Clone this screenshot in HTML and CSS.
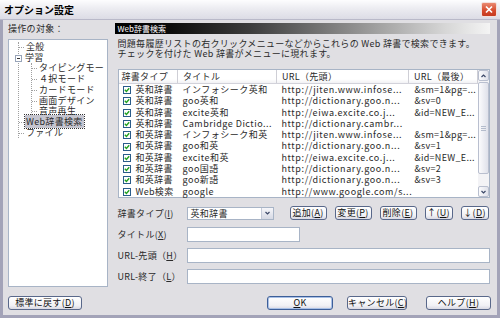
FILE: index.html
```html
<!DOCTYPE html>
<html lang="ja">
  <head>
    <meta charset="utf-8">
    <title>オプション設定</title>
    <link rel="stylesheet" href="styles.css">
  </head>
  <body>
    <div class="window">
      <div class="titlebar">
        <span class="title">オプション設定</span>
        <span class="close">
          <svg width="14" height="13" viewBox="0 0 14 13"><path d="M4 3.5 L10 9.5 M10 3.5 L4 9.5" stroke="#fff" stroke-width="1.7"/></svg>
        </span>
      </div>

      <div class="content">
        <div class="main">
          <div class="side">
            <div class="caption">操作の対象：</div>
            <div class="tree">
              <ul class="root">
                <li><span class="tick"></span>全般</li>
                <li><span class="minus"></span>学習
                  <ul class="sub">
                    <li><span class="tick"></span>タイピングモー</li>
                    <li><span class="tick"></span>４択モード</li>
                    <li><span class="tick"></span>カードモード</li>
                    <li><span class="tick"></span>画面デザイン</li>
                    <li><span class="tick"></span>音声再生</li>
                  </ul>
                </li>
                <li><span class="tick"></span><span class="selected">Web辞書検索</span></li>
                <li><span class="tick"></span>ファイル</li>
              </ul>
            </div>
          </div>

          <div class="panel">
            <div class="banner">Web辞書検索</div>
            <p class="desc">問題毎履歴リストの右クリックメニューなどからこれらの Web 辞書で検索できます。<br>チェックを付けた Web 辞書がメニューに現れます。</p>

            <div class="list">
              <table class="grid">
                <colgroup>
                  <col style="width: 59px">
                  <col style="width: 99px">
                  <col style="width: 132px">
                  <col style="width: 69px">
                </colgroup>
                <thead>
                  <tr><th>辞書タイプ</th><th>タイトル</th><th>URL（先頭）</th><th>URL（最後）</th></tr>
                </thead>
                <tbody>
                  <tr><td><span class="check"></span>英和辞書</td><td>インフォシーク英和</td><td>http://jiten.www.infose...</td><td>&amp;sm=1&amp;pg=...</td></tr>
                  <tr><td><span class="check"></span>英和辞書</td><td>goo英和</td><td>http://dictionary.goo.n...</td><td>&amp;sv=0</td></tr>
                  <tr><td><span class="check"></span>英和辞書</td><td>excite英和</td><td>http://eiwa.excite.co.j...</td><td>&amp;id=NEW_E...</td></tr>
                  <tr><td><span class="check"></span>英和辞書</td><td>Cambridge Dictio...</td><td>http://dictionary.cambr...</td><td></td></tr>
                  <tr><td><span class="check"></span>和英辞書</td><td>インフォシーク和英</td><td>http://jiten.www.infose...</td><td>&amp;sm=1&amp;pg=...</td></tr>
                  <tr><td><span class="check"></span>和英辞書</td><td>goo和英</td><td>http://dictionary.goo.n...</td><td>&amp;sv=1</td></tr>
                  <tr><td><span class="check"></span>和英辞書</td><td>excite和英</td><td>http://eiwa.excite.co.j...</td><td>&amp;id=NEW_E...</td></tr>
                  <tr><td><span class="check"></span>和英辞書</td><td>goo国語</td><td>http://dictionary.goo.n...</td><td>&amp;sv=2</td></tr>
                  <tr><td><span class="check"></span>和英辞書</td><td>goo新語</td><td>http://dictionary.goo.n...</td><td>&amp;sv=3</td></tr>
                  <tr><td><span class="check"></span>Web検索</td><td>google</td><td>http://www.google.com/s...</td><td></td></tr>
                </tbody>
              </table>
              <div class="scrollbar">
                <div class="sb-btn"><svg width="5" height="4" viewBox="0 0 5 4"><path d="M0.5 3 L2.5 1 L4.5 3" fill="none" stroke="#3b4868" stroke-width="1.2"/></svg></div>
                <div class="sb-track">
                  <div class="sb-thumb"><svg width="5" height="5" viewBox="0 0 5 5"><path d="M0 0.5 H5 M0 2.5 H5 M0 4.5 H5" stroke="#b4bccc" stroke-width="1"/></svg></div>
                </div>
                <div class="sb-btn"><svg width="5" height="4" viewBox="0 0 5 4"><path d="M0.5 1 L2.5 3 L4.5 1" fill="none" stroke="#3b4868" stroke-width="1.2"/></svg></div>
              </div>
            </div>

            <div class="form">
              <div class="row">
                <label>辞書タイプ(<u>I</u>)</label>
                <div class="select">
                  <span class="value">英和辞書</span>
                  <span class="drop"><svg width="5" height="4" viewBox="0 0 5 4"><path d="M0.5 1 L2.5 3 L4.5 1" fill="none" stroke="#3b4868" stroke-width="1.2"/></svg></span>
                </div>
                <div class="actions">
                  <button class="btn wide">追加(<u>A</u>)</button>
                  <button class="btn wide">変更(<u>P</u>)</button>
                  <button class="btn wide">削除(<u>E</u>)</button>
                  <button class="btn narrow">↑(<u>U</u>)</button>
                  <button class="btn narrow">↓(<u>D</u>)</button>
                </div>
              </div>
              <div class="row">
                <label>タイトル(<u>X</u>)</label>
                <div class="field short"></div>
              </div>
              <div class="row">
                <label>URL-先頭（<u>H</u>）</label>
                <div class="field long"></div>
              </div>
              <div class="row">
                <label>URL-終了（<u>L</u>）</label>
                <div class="field long"></div>
              </div>
            </div>
          </div>
        </div>

        <div class="footer">
          <button class="btn reset">標準に戻す(<u>D</u>)</button>
          <button class="btn ok default"><u>O</u>K</button>
          <button class="btn cancel">キャンセル(<u>C</u>)</button>
          <button class="btn help">ヘルプ(<u>H</u>)</button>
        </div>
      </div>
    </div>
  </body>
</html>
```

FILE: styles.css
```css
html {
  font-family: "Noto Sans CJK JP", sans-serif;
  font-size: 9px;
  letter-spacing: 0.3px;
  color: #2a2a2a;
}

body {
  margin: 0;
  padding: 0;
  background: #e0dfe3;
}

.window {
  width: 500px;
  height: 318px;
  display: flex;
  flex-direction: column;
}

/* title bar */
.titlebar {
  height: 20px;
  box-sizing: border-box;
  display: flex;
  align-items: center;
  padding: 0 3px 0 4px;
  background: linear-gradient(#fdfdfe, #ececf1 45%, #dcdce5);
  border-bottom: 1px solid #b9b9c9;
}

.title {
  font-weight: bold;
  font-size: 10px;
  letter-spacing: 0;
  color: #000;
}

.close {
  margin-left: auto;
  width: 14px;
  height: 13px;
  display: flex;
  border-radius: 2px;
  border: 1px solid #f4e0dc;
  background: linear-gradient(#e98a72, #d6492b 60%, #c53a1f);
}

/* window body */
.content {
  flex: 1;
  display: flex;
  flex-direction: column;
  padding: 3px 7px 5px 5px;
  border: 3px solid #a3a3b8;
  border-top: none;
}

.main {
  height: 267px;
  display: flex;
  gap: 7px;
}

.side {
  width: 100px;
}

.caption {
  height: 16px;
  line-height: 12px;
}

.tree {
  height: 248px;
  box-sizing: border-box;
  background: #fff;
  border: 1px solid #a8b4c6;
  overflow: hidden;
  white-space: nowrap;
  padding-top: 2px;
}

.tree ul {
  list-style: none;
  margin: 0;
  padding: 0;
  border-left: 1px dotted #a0a0a0;
}

.tree li {
  line-height: 10.7px;
}

.root {
  margin-left: 9px !important;
}

.sub {
  margin-left: 12px !important;
}

.tick {
  display: inline-block;
  width: 5px;
  height: 0;
  border-top: 1px dotted #a0a0a0;
  vertical-align: middle;
  margin-right: 2px;
}

.minus {
  display: inline-block;
  width: 7px;
  height: 7px;
  box-sizing: border-box;
  border: 1px solid #98a4b8;
  background: #fff linear-gradient(#333, #333) no-repeat center / 3px 1px;
  vertical-align: middle;
  margin-left: -4px;
  margin-right: 3px;
}

.selected {
  background: #c5c5cf;
  outline: 1px dotted #333;
  padding: 0 1px;
  margin-left: -1px;
}

/* right panel */
.panel {
  flex: 1;
}

.banner {
  height: 11px;
  line-height: 11px;
  font-size: 8px;
  letter-spacing: 0;
  color: #fff;
  padding-left: 3px;
  background: linear-gradient(to right, #000 0%, #0c0c0c 15%, #3c3c3c 36%, #8c8c8c 63%, #d6d6d6 88%, #f4f4f4 100%);
}

.desc {
  margin: 5px 0 0 0;
  padding-left: 3px;
  line-height: 9.5px;
  height: 19px;
  white-space: nowrap;
}

.list {
  margin-top: 11px;
  margin-left: 3px;
  height: 129px;
  box-sizing: border-box;
  border: 1px solid #a8b4c6;
  background: #fff;
  display: flex;
}

.grid {
  width: 359px;
  table-layout: fixed;
  border-collapse: collapse;
}

.grid th {
  height: 13px;
  padding: 0 0 0 5px;
  font-weight: normal;
  text-align: left;
  background: linear-gradient(#fff 70%, #f1f1f4);
  border-bottom: 1px solid #d2d2da;
  border-right: 1px solid #cfcfd6;
  white-space: nowrap;
}

.grid th:first-child {
  padding-left: 3px;
}

.grid td {
  height: 11.3px;
  line-height: 11.3px;
  padding: 0 0 0 5px;
  white-space: nowrap;
}

.grid td:first-child {
  padding-left: 4px;
}

.grid td:nth-child(2) {
  letter-spacing: 0.5px;
}

.grid td:nth-child(3) {
  letter-spacing: 0.6px;
}

.grid td:nth-child(4) {
  padding-left: 6px;
}

.check {
  display: inline-block;
  width: 8px;
  height: 8px;
  box-sizing: border-box;
  border: 1px solid #2a5c8a;
  background: #fff url("data:image/svg+xml,%3Csvg xmlns='http://www.w3.org/2000/svg' width='6' height='6'%3E%3Cpath d='M0.8 2.8 L2.4 4.4 L5.2 1.2' fill='none' stroke='%2321a121' stroke-width='1.4'/%3E%3C/svg%3E") no-repeat center;
  vertical-align: middle;
  margin: -1px 5px 0 0;
}

/* scrollbar */
.scrollbar {
  width: 11px;
  display: flex;
  flex-direction: column;
  background: #f3f3f6;
}

.sb-btn,
.sb-thumb {
  box-sizing: border-box;
  border: 1px solid #b9bfcf;
  border-radius: 2px;
  background: linear-gradient(to right, #fbfbfd, #dfe1ea);
  display: flex;
  align-items: center;
  justify-content: center;
}

.sb-btn {
  height: 11px;
}

.sb-track {
  flex: 1;
  padding: 1px 0;
}

.sb-thumb {
  height: 92px;
}

/* form */
.form {
  margin-top: 8px;
  display: flex;
  flex-direction: column;
  gap: 7px;
}

.row {
  height: 14px;
  display: flex;
  align-items: center;
}

.row label {
  width: 69px;
  padding-left: 3px;
  white-space: nowrap;
}

.select {
  width: 87px;
  height: 13px;
  box-sizing: border-box;
  border: 1px solid #a8b4c6;
  background: #fff;
  display: flex;
}

.select .value {
  padding-left: 3px;
  line-height: 11px;
}

.select .drop {
  margin-left: auto;
  width: 11px;
  border-left: 1px solid #c4cad8;
  background: linear-gradient(#f6f6fa, #d6d9e4);
  display: flex;
  align-items: center;
  justify-content: center;
}

.actions {
  margin-left: 16px;
  display: flex;
  gap: 8px;
}

.btn {
  height: 14px;
  box-sizing: border-box;
  padding: 0;
  font: inherit;
  letter-spacing: inherit;
  line-height: 12px;
  color: #111;
  border: 1px solid #59688a;
  border-radius: 3px;
  background: linear-gradient(#ffffff, #f1f1f5 70%, #d9d9e3);
  text-align: center;
  white-space: nowrap;
}

.btn.wide {
  width: 37px;
}

.btn.narrow {
  width: 28px;
}

.field {
  height: 15px;
  box-sizing: border-box;
  border: 1px solid #a8b4c6;
  background: #fff;
}

.field.short {
  width: 113px;
}

.field.long {
  width: 303px;
}

/* footer */
.footer {
  margin-top: 6px;
  height: 14px;
  display: flex;
  align-items: center;
  margin-right: -1px;
}

.btn.reset {
  width: 74px;
}

.btn.ok {
  width: 66px;
  margin-left: auto;
}

.btn.default {
  border-color: #3d5f99;
  box-shadow: inset 0 0 0 1px #a9c0e6;
}

.btn.cancel {
  width: 60px;
  margin-left: 14px;
}

.btn.help {
  width: 65px;
  margin-left: 19px;
}
```
